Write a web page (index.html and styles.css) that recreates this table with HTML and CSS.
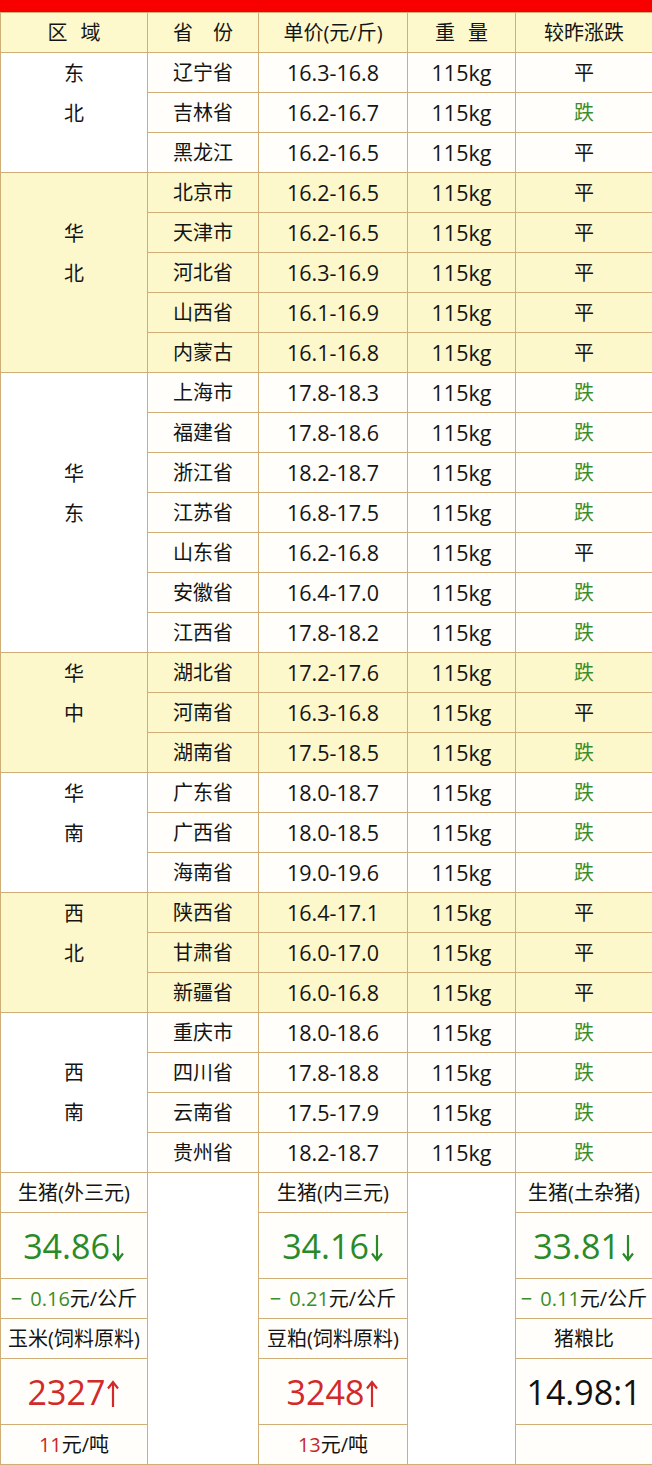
FILE: index.html
```html
<!DOCTYPE html>
<html lang="zh">
<head>
<meta charset="utf-8">
<link rel="stylesheet" href="styles.css">
</head>
<body>
<div class="topbar"></div>
<table class="price">
<colgroup><col class="c1"><col class="c2"><col class="c3"><col class="c4"><col class="c5"></colgroup>
<thead>
<tr class="hd"><th class="ws">区 域</th><th>省　份</th><th>单价(元/斤)</th><th class="ws">重 量</th><th>较昨涨跌</th></tr>
</thead>
<tbody>
<tr><td class="reg" rowspan="3">东<br>北</td><td>辽宁省</td><td>16.3-16.8</td><td>115kg</td><td>平</td></tr>
<tr><td>吉林省</td><td>16.2-16.7</td><td>115kg</td><td class="dn">跌</td></tr>
<tr><td>黑龙江</td><td>16.2-16.5</td><td>115kg</td><td>平</td></tr>

<tr class="y"><td class="reg" rowspan="5">华<br>北</td><td>北京市</td><td>16.2-16.5</td><td>115kg</td><td>平</td></tr>
<tr class="y"><td>天津市</td><td>16.2-16.5</td><td>115kg</td><td>平</td></tr>
<tr class="y"><td>河北省</td><td>16.3-16.9</td><td>115kg</td><td>平</td></tr>
<tr class="y"><td>山西省</td><td>16.1-16.9</td><td>115kg</td><td>平</td></tr>
<tr class="y"><td>内蒙古</td><td>16.1-16.8</td><td>115kg</td><td>平</td></tr>

<tr><td class="reg" rowspan="7">华<br>东</td><td>上海市</td><td>17.8-18.3</td><td>115kg</td><td class="dn">跌</td></tr>
<tr><td>福建省</td><td>17.8-18.6</td><td>115kg</td><td class="dn">跌</td></tr>
<tr><td>浙江省</td><td>18.2-18.7</td><td>115kg</td><td class="dn">跌</td></tr>
<tr><td>江苏省</td><td>16.8-17.5</td><td>115kg</td><td class="dn">跌</td></tr>
<tr><td>山东省</td><td>16.2-16.8</td><td>115kg</td><td>平</td></tr>
<tr><td>安徽省</td><td>16.4-17.0</td><td>115kg</td><td class="dn">跌</td></tr>
<tr><td>江西省</td><td>17.8-18.2</td><td>115kg</td><td class="dn">跌</td></tr>

<tr class="y"><td class="reg" rowspan="3">华<br>中</td><td>湖北省</td><td>17.2-17.6</td><td>115kg</td><td class="dn">跌</td></tr>
<tr class="y"><td>河南省</td><td>16.3-16.8</td><td>115kg</td><td>平</td></tr>
<tr class="y"><td>湖南省</td><td>17.5-18.5</td><td>115kg</td><td class="dn">跌</td></tr>

<tr><td class="reg" rowspan="3">华<br>南</td><td>广东省</td><td>18.0-18.7</td><td>115kg</td><td class="dn">跌</td></tr>
<tr><td>广西省</td><td>18.0-18.5</td><td>115kg</td><td class="dn">跌</td></tr>
<tr><td>海南省</td><td>19.0-19.6</td><td>115kg</td><td class="dn">跌</td></tr>

<tr class="y"><td class="reg" rowspan="3">西<br>北</td><td>陕西省</td><td>16.4-17.1</td><td>115kg</td><td>平</td></tr>
<tr class="y"><td>甘肃省</td><td>16.0-17.0</td><td>115kg</td><td>平</td></tr>
<tr class="y"><td>新疆省</td><td>16.0-16.8</td><td>115kg</td><td>平</td></tr>

<tr><td class="reg mid" rowspan="4">西<br>南</td><td>重庆市</td><td>18.0-18.6</td><td>115kg</td><td class="dn">跌</td></tr>
<tr><td>四川省</td><td>17.8-18.8</td><td>115kg</td><td class="dn">跌</td></tr>
<tr><td>云南省</td><td>17.5-17.9</td><td>115kg</td><td class="dn">跌</td></tr>
<tr><td>贵州省</td><td>18.2-18.7</td><td>115kg</td><td class="dn">跌</td></tr>

<tr class="lbl"><td>生猪(外三元)</td><td class="blank" rowspan="6"></td><td>生猪(内三元)</td><td class="blank" rowspan="6"></td><td>生猪(土杂猪)</td></tr>
<tr class="big"><td class="g">34.86<svg class="arr" viewBox="0 0 14 28" width="14" height="28"><path d="M7 1V26M2 19.5L7 26L12 19.5" fill="none" stroke="currentColor" stroke-width="2.2"/></svg></td><td class="g">34.16<svg class="arr" viewBox="0 0 14 28" width="14" height="28"><path d="M7 1V26M2 19.5L7 26L12 19.5" fill="none" stroke="currentColor" stroke-width="2.2"/></svg></td><td class="g">33.81<svg class="arr" viewBox="0 0 14 28" width="14" height="28"><path d="M7 1V26M2 19.5L7 26L12 19.5" fill="none" stroke="currentColor" stroke-width="2.2"/></svg></td></tr>
<tr class="lbl"><td><span class="gc"><span class="minus">−</span>0.16</span>元/公斤</td><td><span class="gc"><span class="minus">−</span>0.21</span>元/公斤</td><td><span class="gc"><span class="minus">−</span>0.11</span>元/公斤</td></tr>
<tr class="lbl"><td>玉米(饲料原料)</td><td>豆粕(饲料原料)</td><td>猪粮比</td></tr>
<tr class="big"><td class="r">2327<svg class="arr" viewBox="0 0 14 28" width="14" height="28"><path d="M7 27V2M2 8.5L7 2L12 8.5" fill="none" stroke="currentColor" stroke-width="2.2"/></svg></td><td class="r">3248<svg class="arr" viewBox="0 0 14 28" width="14" height="28"><path d="M7 27V2M2 8.5L7 2L12 8.5" fill="none" stroke="currentColor" stroke-width="2.2"/></svg></td><td class="k">14.98:1</td></tr>
<tr class="lbl"><td><span class="rc">11</span>元/吨</td><td><span class="rc">13</span>元/吨</td><td></td></tr>
</tbody>
</table>
</body>
</html>
```
FILE: styles.css
```css
html, body {
  margin: 0;
  padding: 0;
  background: #ffffff;
}
body {
  width: 652px;
  font-family: "Open Sans", "Noto Sans CJK SC", sans-serif;
  color: #141414;
}
.topbar {
  height: 12px;
  background: #f80000;
}
.price {
  width: 652px;
  border-collapse: collapse;
  table-layout: fixed;
}
.c1 { width: 147px; }
.c2 { width: 111px; }
.c3 { width: 149px; }
.c4 { width: 108px; }
.c5 { width: 137px; }
.price th,
.price td {
  border: 1px solid #cfae78;
  padding: 0;
  text-align: center;
  vertical-align: middle;
  font-size: 20px;
  font-weight: 400;
  line-height: 24px;
  white-space: nowrap;
  background: #fffefa;
}
.price tr {
  height: 40px;
}
.price .hd th {
  background: #fdf9cc;
}
.price th.ws {
  word-spacing: 8px;
}
.price tr.y td {
  background: #fdf8cb;
}
.price tbody tr:not(.lbl):not(.big) td:nth-last-child(2),
.price tbody tr:not(.lbl):not(.big) td:nth-last-child(3) {
  font-size: 21.5px;
}
.price td.reg {
  line-height: 40px;
  padding-bottom: 38px;
  background: #ffffff;
}
.price td.reg.mid {
  padding-bottom: 0;
}
.price tr.y td.reg {
  background: #fdf8cb;
}
.dn {
  color: #3b8d2c;
}
.price tr.big {
  height: 66px;
}
.price tr.big td {
  font-size: 34px;
  line-height: 40px;
}
.price td.blank {
  background: #ffffff;
}
.g { color: #2a8a2a; }
.r { color: #d12a2a; }
.k { color: #111111; }
.gc { color: #3b8d2c; }
.rc { color: #c82626; }
.minus {
  margin-right: 8px;
}
.arr {
  display: inline-block;
  vertical-align: -3px;
  margin-left: 1px;
}
```
